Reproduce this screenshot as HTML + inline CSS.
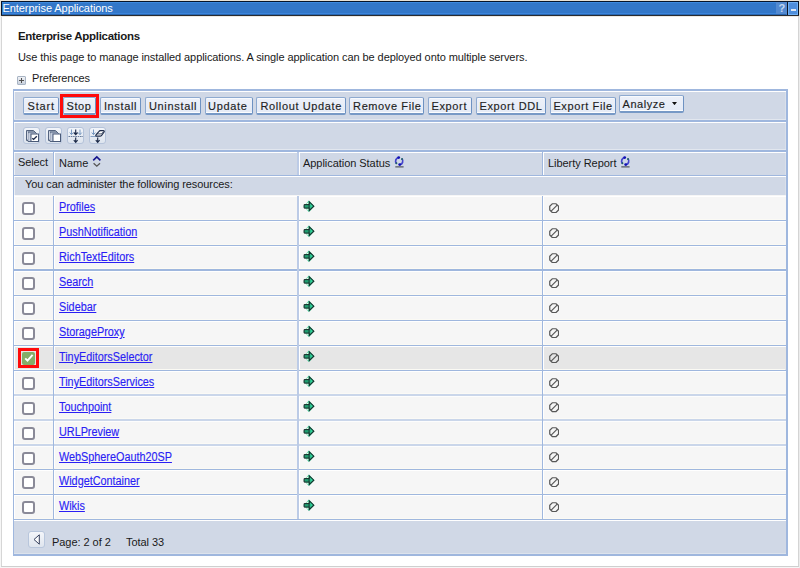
<!DOCTYPE html>
<html><head><meta charset="utf-8"><style>
*{margin:0;padding:0;box-sizing:border-box}
html,body{width:800px;height:568px;overflow:hidden;background:#fff}
body{position:relative;font-family:"Liberation Sans",sans-serif;font-size:11px;color:#1a1a1a}
.a{position:absolute}
.t{position:absolute;white-space:nowrap;line-height:13px}
.btn{position:absolute;top:97px;height:18px;background:linear-gradient(#edf1f9,#e4eaf6);border:1px solid #8eaad0;border-right-color:#6e92c2;border-bottom:2px solid #7799c6;border-radius:2px;box-shadow:inset 0 1px 0 #f8fafd,inset 0 -1px 0 #fcfdff;font-size:11px;line-height:16px;text-align:center;color:#1e1e1e;white-space:nowrap}
.bt{font-size:11px;line-height:14px;color:#1e1e1e;-webkit-text-stroke:0.15px #1e1e1e}
.lk{color:#2a1ef4;text-decoration:underline;font-size:12px;transform:scaleX(0.902);transform-origin:0 0;-webkit-text-stroke:0.15px #2a1ef4}
</style></head><body>
<div class="a" style="left:0px;top:0px;width:800px;height:568px;background:#f6f6f6"></div>
<div class="a" style="left:0px;top:0px;width:800px;height:16px;background:#e9e1d5"></div>
<div class="a" style="left:1px;top:16px;width:798px;height:551px;background:#fff"></div>
<div class="a" style="left:1px;top:16px;width:798px;height:1px;background:#eeeae3"></div>
<div class="a" style="left:1px;top:17px;width:1px;height:550px;background:#d6d6d6"></div>
<div class="a" style="left:798px;top:16px;width:1px;height:551px;background:#d4d4d4"></div>
<div class="a" style="left:799px;top:16px;width:1px;height:552px;background:#ececec"></div>
<div class="a" style="left:1px;top:566px;width:798px;height:1px;background:#cfcfcf"></div>
<div class="a" style="left:1px;top:1px;width:798px;height:15px;background:#07152a"></div>
<div class="a" style="left:1px;top:15px;width:798px;height:1px;background:#2a2c30"></div>
<div class="a" style="left:2px;top:2px;width:796px;height:13px;background:#3377c8"></div>
<div class="a" style="left:2px;top:2px;width:784px;height:1px;background:#3d8ae0"></div>
<div class="a" style="left:2px;top:13px;width:784px;height:1px;background:#3a84dc"></div>
<div class="a" style="left:2px;top:14px;width:784px;height:1px;background:#2866b0"></div>
<div class="a" style="left:776px;top:2px;width:11px;height:12px;background:#5289d0"></div>
<div class="a" style="left:787px;top:2px;width:1px;height:13px;background:#0d1525"></div>
<div class="a" style="left:788px;top:2px;width:10px;height:13px;background:#4f8fdc;border:1px solid #6fb0f4"></div>
<div class="a" style="left:791px;top:9px;width:5px;height:2px;background:#dfe8f4"></div>
<div class="t" style="left:778.5px;top:2px;font-size:11px;font-weight:bold;color:#c4d6ee;line-height:13px">?</div>
<div class="t" style="left:2.5px;top:2px;color:#fff;line-height:13px;letter-spacing:-0.07px">Enterprise Applications</div>
<div class="t" style="left:18px;top:30px;font-weight:bold;font-size:11.5px;letter-spacing:-0.3px">Enterprise Applications</div>
<div class="t" style="left:18px;top:51px;letter-spacing:-0.08px">Use this page to manage installed applications. A single application can be deployed onto multiple servers.</div>
<div class="a" style="left:17px;top:76px;width:9px;height:9px;background:linear-gradient(#f0f2f6,#c8d0dc);border:1px solid #a8b4c4;border-radius:1px"></div>
<div class="a" style="left:19px;top:80px;width:5px;height:1px;background:#505050"></div>
<div class="a" style="left:21px;top:78px;width:1px;height:5px;background:#505050"></div>
<div class="t" style="left:32px;top:72px;letter-spacing:-0.12px">Preferences</div>
<div class="a" style="left:13px;top:89px;width:775px;height:467px;background:#d0d8e6"></div>
<div class="a" style="left:13px;top:89px;width:775px;height:2px;background:#9fb7de"></div>
<div class="a" style="left:13px;top:89px;width:1px;height:467px;background:#9fb7de"></div>
<div class="a" style="left:786px;top:89px;width:2px;height:467px;background:#9fb7de"></div>
<div class="a" style="left:785px;top:91px;width:1px;height:463px;background:#dae0ea"></div>
<div class="a" style="left:14px;top:91px;width:1px;height:463px;background:#eef1f6"></div>
<div class="a" style="left:14px;top:91px;width:772px;height:1px;background:#fff"></div>
<div class="a" style="left:14px;top:119px;width:772px;height:1px;background:#e2e7ef"></div><div class="a" style="left:14px;top:120px;width:772px;height:2px;background:#9fb7de"></div><div class="a" style="left:14px;top:122px;width:772px;height:1px;background:#fff"></div>
<div class="a" style="left:14px;top:149px;width:772px;height:1px;background:#e2e7ef"></div><div class="a" style="left:14px;top:150px;width:772px;height:2px;background:#9fb7de"></div><div class="a" style="left:14px;top:152px;width:772px;height:1px;background:#fff"></div>
<div class="a" style="left:14px;top:175px;width:772px;height:1px;background:#9fb7de"></div><div class="a" style="left:14px;top:176px;width:772px;height:1px;background:#fff"></div>
<div class="a" style="left:14px;top:195px;width:772px;height:1px;background:#9fb7de"></div><div class="a" style="left:14px;top:196px;width:772px;height:1px;background:#fff"></div>
<div class="btn" style="left:23px;width:36px"></div>
<div class="t bt" style="left:27.5px;top:99px;letter-spacing:0.85px">Start</div>
<div class="btn" style="left:63px;width:33px"></div>
<div class="t bt" style="left:66.6px;top:99px;letter-spacing:0.55px">Stop</div>
<div class="btn" style="left:100px;width:41px"></div>
<div class="t bt" style="left:103.9px;top:99px;letter-spacing:0.65px">Install</div>
<div class="btn" style="left:145px;width:56px"></div>
<div class="t bt" style="left:148.9px;top:99px;letter-spacing:0.68px">Uninstall</div>
<div class="btn" style="left:205px;width:48px"></div>
<div class="t bt" style="left:208.1px;top:99px;letter-spacing:0.65px">Update</div>
<div class="btn" style="left:256px;width:90px"></div>
<div class="t bt" style="left:260.5px;top:99px;letter-spacing:0.62px">Rollout Update</div>
<div class="btn" style="left:349px;width:75px"></div>
<div class="t bt" style="left:353.1px;top:99px;letter-spacing:0.6px">Remove File</div>
<div class="btn" style="left:428px;width:44px"></div>
<div class="t bt" style="left:431.4px;top:99px;letter-spacing:0.65px">Export</div>
<div class="btn" style="left:476px;width:70px"></div>
<div class="t bt" style="left:479.5px;top:99px;letter-spacing:0.62px">Export DDL</div>
<div class="btn" style="left:550px;width:66px"></div>
<div class="t bt" style="left:553.4px;top:99px;letter-spacing:0.62px">Export File</div>
<div class="btn" style="left:619px;width:65px;top:95px"></div>
<div class="t bt" style="left:622.5px;top:97px;letter-spacing:0.55px">Analyze</div>
<svg class="a" style="left:672px;top:101.8px" width="5" height="3.2" viewBox="0 0 5 3.2"><path d="M0 0H5L2.5 3.2Z" fill="#111"/></svg>
<div class="a" style="left:60px;top:94px;width:39px;height:24px;border:3px solid #ff0a0a;background:transparent"></div>
<div class="a" style="left:23px;top:127px;width:17px;height:17px;border:1px solid #b5c3da;border-radius:3px;background:linear-gradient(#f2f5fa,#dde4ee)"></div>
<div class="a" style="left:45px;top:127px;width:17px;height:17px;border:1px solid #b5c3da;border-radius:3px;background:linear-gradient(#f2f5fa,#dde4ee)"></div>
<div class="a" style="left:67px;top:127px;width:17px;height:17px;border:1px solid #b5c3da;border-radius:3px;background:linear-gradient(#f2f5fa,#dde4ee)"></div>
<div class="a" style="left:89px;top:127px;width:17px;height:17px;border:1px solid #b5c3da;border-radius:3px;background:linear-gradient(#f2f5fa,#dde4ee)"></div>

<svg class="a" style="left:23px;top:127px" width="18" height="18" viewBox="0 0 18 18">
 <path d="M3.5 3.5H10.5L12 5V13.5H3.5Z" fill="#b4bfd2" stroke="#55647f" stroke-width="1"/>
 <path d="M5 5H12L13.5 6.5V14.5H5Z" fill="#b4bfd2" stroke="#55647f" stroke-width="1"/>
 <path d="M6 6.3V14" stroke="#e4e9f2" stroke-width="0.8"/><path d="M4.5 4.8V12.5" stroke="#e4e9f2" stroke-width="0.8"/>
 <rect x="8" y="7" width="7.5" height="7.5" fill="#fff" stroke="#4a5a78" stroke-width="1"/>
 <path d="M9.3 11.2L10.6 12.4 13.8 9.2" stroke="#1e2a48" stroke-width="1.4" fill="none"/>
</svg>
<svg class="a" style="left:45px;top:127px" width="18" height="18" viewBox="0 0 18 18">
 <path d="M3.5 3.5H10.5L12 5V13.5H3.5Z" fill="#b4bfd2" stroke="#55647f" stroke-width="1"/>
 <path d="M5 5H12L13.5 6.5V14.5H5Z" fill="#b4bfd2" stroke="#55647f" stroke-width="1"/>
 <path d="M6 6.3V14" stroke="#e4e9f2" stroke-width="0.8"/><path d="M4.5 4.8V12.5" stroke="#e4e9f2" stroke-width="0.8"/>
 <rect x="8" y="7" width="7.5" height="7.5" fill="#fff" stroke="#4a5a78" stroke-width="1"/>
</svg>
<svg class="a" style="left:67px;top:127px" width="18" height="18" viewBox="0 0 18 18">
 <path d="M4.5 2.5v5.3M2.7 5.6L4.5 7.6 6.3 5.6" stroke="#7a9ac2" stroke-width="1" fill="none"/>
 <path d="M8.7 2.5v5.3M6.8 5.5L8.7 7.6 10.6 5.5" stroke="#1c2a48" stroke-width="1.15" fill="none"/>
 <path d="M13 2.5v5.3M11.2 5.6L13 7.6 14.8 5.6" stroke="#7a9ac2" stroke-width="1" fill="none"/>
 <path d="M1.5 9.5h14.5" stroke="#5a6e90" stroke-width="0.9" stroke-dasharray="1.6 0.7"/>
 <path d="M8.7 10.6v4.8M6.8 13.2L8.7 15.3 10.6 13.2" stroke="#1c2a48" stroke-width="1.15" fill="none"/>
</svg>
<svg class="a" style="left:89px;top:127px" width="18" height="18" viewBox="0 0 18 18">
 <path d="M4.5 2.5v5.3M2.7 5.6L4.5 7.6 6.3 5.6" stroke="#7a9ac2" stroke-width="1" fill="none"/>
 <path d="M1.5 9.5h6" stroke="#7a9ac2" stroke-width="0.9"/>
 <path d="M6.8 8.2L9.8 4.6Q10.4 3.6 11.5 3.6H14.3Q15.7 3.8 15.1 5L12.6 8.3Q12 9.1 11 9.1H7.6Q6.4 9.1 6.8 8.2Z" fill="#fff" stroke="#1c2a48" stroke-width="1.1"/>
 <path d="M7.6 6.9H12.4" stroke="#1c2a48" stroke-width="0.8" fill="none"/>
 <path d="M12.4 6.9L14.9 4.3" stroke="#1c2a48" stroke-width="0.8" fill="none"/>
 <path d="M8.7 10.6v4.8M6.8 13.2L8.7 15.3 10.6 13.2" stroke="#1c2a48" stroke-width="1.15" fill="none"/>
</svg>

<div class="a" style="left:53px;top:152px;width:1px;height:23px;background:#9fb7de"></div>
<div class="a" style="left:54px;top:152px;width:1px;height:23px;background:#fff"></div>
<div class="a" style="left:297px;top:152px;width:2px;height:23px;background:#bccbe6"></div>
<div class="a" style="left:299px;top:152px;width:1px;height:23px;background:#fff"></div>
<div class="a" style="left:542px;top:152px;width:1px;height:23px;background:#9fb7de"></div>
<div class="a" style="left:543px;top:152px;width:1px;height:23px;background:#fff"></div>
<div class="t" style="left:18px;top:156px;letter-spacing:-0.1px">Select</div>
<div class="t" style="left:59px;top:157px;">Name</div>
<div class="t" style="left:303px;top:157px;letter-spacing:-0.05px">Application Status</div>
<div class="t" style="left:548px;top:157px;letter-spacing:-0.05px">Liberty Report</div>
<svg class="a" style="left:92px;top:155px" width="10" height="13" viewBox="0 0 10 13"><path d="M1.2 5.3L4.8 1.9 8.4 5.3" stroke="#14148c" stroke-width="1.6" fill="none"/><path d="M1.6 8.2L4.8 11.2 8 8.2" stroke="#555" stroke-width="1.3" fill="none"/></svg>
<svg class="a" style="left:394px;top:155px" width="11" height="13" viewBox="0 0 11 13"><path d="M4.57 2.55A3.6 3.6 0 0 0 2.44 8.41" stroke="#4444cc" stroke-width="1.7" fill="none"/><path d="M5.83 9.65A3.6 3.6 0 0 0 7.96 3.79" stroke="#4444cc" stroke-width="1.7" fill="none"/><circle cx="4.7" cy="2.6" r="1.4" fill="#1212b4"/><circle cx="5.7" cy="9.6" r="1.4" fill="#1212b4"/><circle cx="2.4" cy="8.3" r="1" fill="#1f5f66"/><circle cx="8" cy="3.9" r="1" fill="#1f5f66"/><rect x="1.3" y="11.1" width="8.3" height="1.5" fill="#6a6e78"/></svg>
<svg class="a" style="left:620px;top:155px" width="11" height="13" viewBox="0 0 11 13"><path d="M4.57 2.55A3.6 3.6 0 0 0 2.44 8.41" stroke="#4444cc" stroke-width="1.7" fill="none"/><path d="M5.83 9.65A3.6 3.6 0 0 0 7.96 3.79" stroke="#4444cc" stroke-width="1.7" fill="none"/><circle cx="4.7" cy="2.6" r="1.4" fill="#1212b4"/><circle cx="5.7" cy="9.6" r="1.4" fill="#1212b4"/><circle cx="2.4" cy="8.3" r="1" fill="#1f5f66"/><circle cx="8" cy="3.9" r="1" fill="#1f5f66"/><rect x="1.3" y="11.1" width="8.3" height="1.5" fill="#6a6e78"/></svg>
<div class="t" style="left:25px;top:178px;letter-spacing:-0.095px">You can administer the following resources:</div>
<div class="a" style="left:14px;top:195px;width:772px;height:26px;background:#f6f6f6"></div>
<div class="a" style="left:14px;top:195px;width:1px;height:26px;background:#fff"></div>
<div class="a" style="left:22px;top:202px;width:13px;height:13px;background:#fff;border:2px solid #8a8a98;border-radius:3px"></div>
<div class="t lk" style="left:59px;top:201px">Profiles</div>
<svg class="a" style="left:303px;top:200px" width="12" height="12" viewBox="0 0 12 12"><path d="M6 0.5L11.5 6.2 6 11.9 0.5 6.2Z" fill="#38d09a"/><path d="M3 4.1L5.4 2V4.1Z M3 8.6L5.4 10.6V8.6Z" fill="#f2f8e6"/><path d="M1.1 4.6H6.3V8.1H1.1Z" fill="#1f9e70" stroke="#1b2b2b" stroke-width="1"/><path d="M6.3 1.9L10.8 6.2 6.3 10.5Z" fill="#2fd49a" stroke="#1b2b2b" stroke-width="1.05" stroke-linejoin="miter"/><path d="M6.6 4.7H7.4V7.7H6.6Z" fill="#1f9e70"/></svg>
<svg class="a" style="left:548.8px;top:202.8px" width="10.3" height="10.3" viewBox="0 0 11 11"><path d="M3.5 0.8h4l2.7 2.7v4l-2.7 2.7h-4L0.8 7.5v-4z" fill="none" stroke="#585858" stroke-width="1.3"/><path d="M2.3 8.7L8.7 2.3" stroke="#585858" stroke-width="1.2"/></svg>
<div class="a" style="left:14px;top:220px;width:772px;height:26px;background:#f6f6f6"></div>
<div class="a" style="left:14px;top:220px;width:1px;height:26px;background:#fff"></div>
<div class="a" style="left:22px;top:227px;width:13px;height:13px;background:#fff;border:2px solid #8a8a98;border-radius:3px"></div>
<div class="t lk" style="left:59px;top:226px">PushNotification</div>
<svg class="a" style="left:303px;top:225px" width="12" height="12" viewBox="0 0 12 12"><path d="M6 0.5L11.5 6.2 6 11.9 0.5 6.2Z" fill="#38d09a"/><path d="M3 4.1L5.4 2V4.1Z M3 8.6L5.4 10.6V8.6Z" fill="#f2f8e6"/><path d="M1.1 4.6H6.3V8.1H1.1Z" fill="#1f9e70" stroke="#1b2b2b" stroke-width="1"/><path d="M6.3 1.9L10.8 6.2 6.3 10.5Z" fill="#2fd49a" stroke="#1b2b2b" stroke-width="1.05" stroke-linejoin="miter"/><path d="M6.6 4.7H7.4V7.7H6.6Z" fill="#1f9e70"/></svg>
<svg class="a" style="left:548.8px;top:227.8px" width="10.3" height="10.3" viewBox="0 0 11 11"><path d="M3.5 0.8h4l2.7 2.7v4l-2.7 2.7h-4L0.8 7.5v-4z" fill="none" stroke="#585858" stroke-width="1.3"/><path d="M2.3 8.7L8.7 2.3" stroke="#585858" stroke-width="1.2"/></svg>
<div class="a" style="left:14px;top:245px;width:772px;height:26px;background:#f6f6f6"></div>
<div class="a" style="left:14px;top:245px;width:1px;height:26px;background:#fff"></div>
<div class="a" style="left:22px;top:252px;width:13px;height:13px;background:#fff;border:2px solid #8a8a98;border-radius:3px"></div>
<div class="t lk" style="left:59px;top:251px">RichTextEditors</div>
<svg class="a" style="left:303px;top:250px" width="12" height="12" viewBox="0 0 12 12"><path d="M6 0.5L11.5 6.2 6 11.9 0.5 6.2Z" fill="#38d09a"/><path d="M3 4.1L5.4 2V4.1Z M3 8.6L5.4 10.6V8.6Z" fill="#f2f8e6"/><path d="M1.1 4.6H6.3V8.1H1.1Z" fill="#1f9e70" stroke="#1b2b2b" stroke-width="1"/><path d="M6.3 1.9L10.8 6.2 6.3 10.5Z" fill="#2fd49a" stroke="#1b2b2b" stroke-width="1.05" stroke-linejoin="miter"/><path d="M6.6 4.7H7.4V7.7H6.6Z" fill="#1f9e70"/></svg>
<svg class="a" style="left:548.8px;top:252.8px" width="10.3" height="10.3" viewBox="0 0 11 11"><path d="M3.5 0.8h4l2.7 2.7v4l-2.7 2.7h-4L0.8 7.5v-4z" fill="none" stroke="#585858" stroke-width="1.3"/><path d="M2.3 8.7L8.7 2.3" stroke="#585858" stroke-width="1.2"/></svg>
<div class="a" style="left:14px;top:270px;width:772px;height:26px;background:#f6f6f6"></div>
<div class="a" style="left:14px;top:270px;width:1px;height:26px;background:#fff"></div>
<div class="a" style="left:22px;top:277px;width:13px;height:13px;background:#fff;border:2px solid #8a8a98;border-radius:3px"></div>
<div class="t lk" style="left:59px;top:276px">Search</div>
<svg class="a" style="left:303px;top:275px" width="12" height="12" viewBox="0 0 12 12"><path d="M6 0.5L11.5 6.2 6 11.9 0.5 6.2Z" fill="#38d09a"/><path d="M3 4.1L5.4 2V4.1Z M3 8.6L5.4 10.6V8.6Z" fill="#f2f8e6"/><path d="M1.1 4.6H6.3V8.1H1.1Z" fill="#1f9e70" stroke="#1b2b2b" stroke-width="1"/><path d="M6.3 1.9L10.8 6.2 6.3 10.5Z" fill="#2fd49a" stroke="#1b2b2b" stroke-width="1.05" stroke-linejoin="miter"/><path d="M6.6 4.7H7.4V7.7H6.6Z" fill="#1f9e70"/></svg>
<svg class="a" style="left:548.8px;top:277.8px" width="10.3" height="10.3" viewBox="0 0 11 11"><path d="M3.5 0.8h4l2.7 2.7v4l-2.7 2.7h-4L0.8 7.5v-4z" fill="none" stroke="#585858" stroke-width="1.3"/><path d="M2.3 8.7L8.7 2.3" stroke="#585858" stroke-width="1.2"/></svg>
<div class="a" style="left:14px;top:295px;width:772px;height:26px;background:#f6f6f6"></div>
<div class="a" style="left:14px;top:295px;width:1px;height:26px;background:#fff"></div>
<div class="a" style="left:22px;top:302px;width:13px;height:13px;background:#fff;border:2px solid #8a8a98;border-radius:3px"></div>
<div class="t lk" style="left:59px;top:301px">Sidebar</div>
<svg class="a" style="left:303px;top:300px" width="12" height="12" viewBox="0 0 12 12"><path d="M6 0.5L11.5 6.2 6 11.9 0.5 6.2Z" fill="#38d09a"/><path d="M3 4.1L5.4 2V4.1Z M3 8.6L5.4 10.6V8.6Z" fill="#f2f8e6"/><path d="M1.1 4.6H6.3V8.1H1.1Z" fill="#1f9e70" stroke="#1b2b2b" stroke-width="1"/><path d="M6.3 1.9L10.8 6.2 6.3 10.5Z" fill="#2fd49a" stroke="#1b2b2b" stroke-width="1.05" stroke-linejoin="miter"/><path d="M6.6 4.7H7.4V7.7H6.6Z" fill="#1f9e70"/></svg>
<svg class="a" style="left:548.8px;top:302.8px" width="10.3" height="10.3" viewBox="0 0 11 11"><path d="M3.5 0.8h4l2.7 2.7v4l-2.7 2.7h-4L0.8 7.5v-4z" fill="none" stroke="#585858" stroke-width="1.3"/><path d="M2.3 8.7L8.7 2.3" stroke="#585858" stroke-width="1.2"/></svg>
<div class="a" style="left:14px;top:320px;width:772px;height:26px;background:#f6f6f6"></div>
<div class="a" style="left:14px;top:320px;width:1px;height:26px;background:#fff"></div>
<div class="a" style="left:22px;top:327px;width:13px;height:13px;background:#fff;border:2px solid #8a8a98;border-radius:3px"></div>
<div class="t lk" style="left:59px;top:326px">StorageProxy</div>
<svg class="a" style="left:303px;top:325px" width="12" height="12" viewBox="0 0 12 12"><path d="M6 0.5L11.5 6.2 6 11.9 0.5 6.2Z" fill="#38d09a"/><path d="M3 4.1L5.4 2V4.1Z M3 8.6L5.4 10.6V8.6Z" fill="#f2f8e6"/><path d="M1.1 4.6H6.3V8.1H1.1Z" fill="#1f9e70" stroke="#1b2b2b" stroke-width="1"/><path d="M6.3 1.9L10.8 6.2 6.3 10.5Z" fill="#2fd49a" stroke="#1b2b2b" stroke-width="1.05" stroke-linejoin="miter"/><path d="M6.6 4.7H7.4V7.7H6.6Z" fill="#1f9e70"/></svg>
<svg class="a" style="left:548.8px;top:327.8px" width="10.3" height="10.3" viewBox="0 0 11 11"><path d="M3.5 0.8h4l2.7 2.7v4l-2.7 2.7h-4L0.8 7.5v-4z" fill="none" stroke="#585858" stroke-width="1.3"/><path d="M2.3 8.7L8.7 2.3" stroke="#585858" stroke-width="1.2"/></svg>
<div class="a" style="left:14px;top:345px;width:772px;height:26px;background:#e6e6e6"></div>
<div class="a" style="left:14px;top:345px;width:1px;height:26px;background:#fff"></div>
<div class="a" style="left:22px;top:352px;width:13px;height:13px;background:#85ad68;border-radius:2px"></div>
<svg class="a" style="left:22px;top:352px" width="13" height="13" viewBox="0 0 13 13"><path d="M3.2 6.4L5.5 8.7 10.6 2.8" stroke="#fff" stroke-width="1.9" fill="none"/></svg>
<div class="a" style="left:18px;top:348px;width:21px;height:20px;border:3px solid #ff0a0a"></div>
<div class="t lk" style="left:59px;top:351px">TinyEditorsSelector</div>
<svg class="a" style="left:303px;top:350px" width="12" height="12" viewBox="0 0 12 12"><path d="M6 0.5L11.5 6.2 6 11.9 0.5 6.2Z" fill="#38d09a"/><path d="M3 4.1L5.4 2V4.1Z M3 8.6L5.4 10.6V8.6Z" fill="#f2f8e6"/><path d="M1.1 4.6H6.3V8.1H1.1Z" fill="#1f9e70" stroke="#1b2b2b" stroke-width="1"/><path d="M6.3 1.9L10.8 6.2 6.3 10.5Z" fill="#2fd49a" stroke="#1b2b2b" stroke-width="1.05" stroke-linejoin="miter"/><path d="M6.6 4.7H7.4V7.7H6.6Z" fill="#1f9e70"/></svg>
<svg class="a" style="left:548.8px;top:352.8px" width="10.3" height="10.3" viewBox="0 0 11 11"><path d="M3.5 0.8h4l2.7 2.7v4l-2.7 2.7h-4L0.8 7.5v-4z" fill="none" stroke="#585858" stroke-width="1.3"/><path d="M2.3 8.7L8.7 2.3" stroke="#585858" stroke-width="1.2"/></svg>
<div class="a" style="left:14px;top:370px;width:772px;height:25px;background:#f6f6f6"></div>
<div class="a" style="left:14px;top:370px;width:1px;height:25px;background:#fff"></div>
<div class="a" style="left:22px;top:377px;width:13px;height:13px;background:#fff;border:2px solid #8a8a98;border-radius:3px"></div>
<div class="t lk" style="left:59px;top:376px">TinyEditorsServices</div>
<svg class="a" style="left:303px;top:375px" width="12" height="12" viewBox="0 0 12 12"><path d="M6 0.5L11.5 6.2 6 11.9 0.5 6.2Z" fill="#38d09a"/><path d="M3 4.1L5.4 2V4.1Z M3 8.6L5.4 10.6V8.6Z" fill="#f2f8e6"/><path d="M1.1 4.6H6.3V8.1H1.1Z" fill="#1f9e70" stroke="#1b2b2b" stroke-width="1"/><path d="M6.3 1.9L10.8 6.2 6.3 10.5Z" fill="#2fd49a" stroke="#1b2b2b" stroke-width="1.05" stroke-linejoin="miter"/><path d="M6.6 4.7H7.4V7.7H6.6Z" fill="#1f9e70"/></svg>
<svg class="a" style="left:548.8px;top:377.8px" width="10.3" height="10.3" viewBox="0 0 11 11"><path d="M3.5 0.8h4l2.7 2.7v4l-2.7 2.7h-4L0.8 7.5v-4z" fill="none" stroke="#585858" stroke-width="1.3"/><path d="M2.3 8.7L8.7 2.3" stroke="#585858" stroke-width="1.2"/></svg>
<div class="a" style="left:14px;top:394px;width:772px;height:26px;background:#f6f6f6"></div>
<div class="a" style="left:14px;top:394px;width:1px;height:26px;background:#fff"></div>
<div class="a" style="left:22px;top:401.5px;width:13px;height:13px;background:#fff;border:2px solid #8a8a98;border-radius:3px"></div>
<div class="t lk" style="left:59px;top:400.5px">Touchpoint</div>
<svg class="a" style="left:303px;top:399.5px" width="12" height="12" viewBox="0 0 12 12"><path d="M6 0.5L11.5 6.2 6 11.9 0.5 6.2Z" fill="#38d09a"/><path d="M3 4.1L5.4 2V4.1Z M3 8.6L5.4 10.6V8.6Z" fill="#f2f8e6"/><path d="M1.1 4.6H6.3V8.1H1.1Z" fill="#1f9e70" stroke="#1b2b2b" stroke-width="1"/><path d="M6.3 1.9L10.8 6.2 6.3 10.5Z" fill="#2fd49a" stroke="#1b2b2b" stroke-width="1.05" stroke-linejoin="miter"/><path d="M6.6 4.7H7.4V7.7H6.6Z" fill="#1f9e70"/></svg>
<svg class="a" style="left:548.8px;top:402.3px" width="10.3" height="10.3" viewBox="0 0 11 11"><path d="M3.5 0.8h4l2.7 2.7v4l-2.7 2.7h-4L0.8 7.5v-4z" fill="none" stroke="#585858" stroke-width="1.3"/><path d="M2.3 8.7L8.7 2.3" stroke="#585858" stroke-width="1.2"/></svg>
<div class="a" style="left:14px;top:419px;width:772px;height:26px;background:#f6f6f6"></div>
<div class="a" style="left:14px;top:419px;width:1px;height:26px;background:#fff"></div>
<div class="a" style="left:22px;top:426.5px;width:13px;height:13px;background:#fff;border:2px solid #8a8a98;border-radius:3px"></div>
<div class="t lk" style="left:59px;top:425.5px">URLPreview</div>
<svg class="a" style="left:303px;top:424.5px" width="12" height="12" viewBox="0 0 12 12"><path d="M6 0.5L11.5 6.2 6 11.9 0.5 6.2Z" fill="#38d09a"/><path d="M3 4.1L5.4 2V4.1Z M3 8.6L5.4 10.6V8.6Z" fill="#f2f8e6"/><path d="M1.1 4.6H6.3V8.1H1.1Z" fill="#1f9e70" stroke="#1b2b2b" stroke-width="1"/><path d="M6.3 1.9L10.8 6.2 6.3 10.5Z" fill="#2fd49a" stroke="#1b2b2b" stroke-width="1.05" stroke-linejoin="miter"/><path d="M6.6 4.7H7.4V7.7H6.6Z" fill="#1f9e70"/></svg>
<svg class="a" style="left:548.8px;top:427.3px" width="10.3" height="10.3" viewBox="0 0 11 11"><path d="M3.5 0.8h4l2.7 2.7v4l-2.7 2.7h-4L0.8 7.5v-4z" fill="none" stroke="#585858" stroke-width="1.3"/><path d="M2.3 8.7L8.7 2.3" stroke="#585858" stroke-width="1.2"/></svg>
<div class="a" style="left:14px;top:444px;width:772px;height:26px;background:#f6f6f6"></div>
<div class="a" style="left:14px;top:444px;width:1px;height:26px;background:#fff"></div>
<div class="a" style="left:22px;top:451.5px;width:13px;height:13px;background:#fff;border:2px solid #8a8a98;border-radius:3px"></div>
<div class="t lk" style="left:59px;top:450.5px">WebSphereOauth20SP</div>
<svg class="a" style="left:303px;top:449.5px" width="12" height="12" viewBox="0 0 12 12"><path d="M6 0.5L11.5 6.2 6 11.9 0.5 6.2Z" fill="#38d09a"/><path d="M3 4.1L5.4 2V4.1Z M3 8.6L5.4 10.6V8.6Z" fill="#f2f8e6"/><path d="M1.1 4.6H6.3V8.1H1.1Z" fill="#1f9e70" stroke="#1b2b2b" stroke-width="1"/><path d="M6.3 1.9L10.8 6.2 6.3 10.5Z" fill="#2fd49a" stroke="#1b2b2b" stroke-width="1.05" stroke-linejoin="miter"/><path d="M6.6 4.7H7.4V7.7H6.6Z" fill="#1f9e70"/></svg>
<svg class="a" style="left:548.8px;top:452.3px" width="10.3" height="10.3" viewBox="0 0 11 11"><path d="M3.5 0.8h4l2.7 2.7v4l-2.7 2.7h-4L0.8 7.5v-4z" fill="none" stroke="#585858" stroke-width="1.3"/><path d="M2.3 8.7L8.7 2.3" stroke="#585858" stroke-width="1.2"/></svg>
<div class="a" style="left:14px;top:469px;width:772px;height:26px;background:#f6f6f6"></div>
<div class="a" style="left:14px;top:469px;width:1px;height:26px;background:#fff"></div>
<div class="a" style="left:22px;top:476px;width:13px;height:13px;background:#fff;border:2px solid #8a8a98;border-radius:3px"></div>
<div class="t lk" style="left:59px;top:475px">WidgetContainer</div>
<svg class="a" style="left:303px;top:474px" width="12" height="12" viewBox="0 0 12 12"><path d="M6 0.5L11.5 6.2 6 11.9 0.5 6.2Z" fill="#38d09a"/><path d="M3 4.1L5.4 2V4.1Z M3 8.6L5.4 10.6V8.6Z" fill="#f2f8e6"/><path d="M1.1 4.6H6.3V8.1H1.1Z" fill="#1f9e70" stroke="#1b2b2b" stroke-width="1"/><path d="M6.3 1.9L10.8 6.2 6.3 10.5Z" fill="#2fd49a" stroke="#1b2b2b" stroke-width="1.05" stroke-linejoin="miter"/><path d="M6.6 4.7H7.4V7.7H6.6Z" fill="#1f9e70"/></svg>
<svg class="a" style="left:548.8px;top:476.8px" width="10.3" height="10.3" viewBox="0 0 11 11"><path d="M3.5 0.8h4l2.7 2.7v4l-2.7 2.7h-4L0.8 7.5v-4z" fill="none" stroke="#585858" stroke-width="1.3"/><path d="M2.3 8.7L8.7 2.3" stroke="#585858" stroke-width="1.2"/></svg>
<div class="a" style="left:14px;top:494px;width:772px;height:26px;background:#f6f6f6"></div>
<div class="a" style="left:14px;top:494px;width:1px;height:26px;background:#fff"></div>
<div class="a" style="left:22px;top:501px;width:13px;height:13px;background:#fff;border:2px solid #8a8a98;border-radius:3px"></div>
<div class="t lk" style="left:59px;top:500px">Wikis</div>
<svg class="a" style="left:303px;top:499px" width="12" height="12" viewBox="0 0 12 12"><path d="M6 0.5L11.5 6.2 6 11.9 0.5 6.2Z" fill="#38d09a"/><path d="M3 4.1L5.4 2V4.1Z M3 8.6L5.4 10.6V8.6Z" fill="#f2f8e6"/><path d="M1.1 4.6H6.3V8.1H1.1Z" fill="#1f9e70" stroke="#1b2b2b" stroke-width="1"/><path d="M6.3 1.9L10.8 6.2 6.3 10.5Z" fill="#2fd49a" stroke="#1b2b2b" stroke-width="1.05" stroke-linejoin="miter"/><path d="M6.6 4.7H7.4V7.7H6.6Z" fill="#1f9e70"/></svg>
<svg class="a" style="left:548.8px;top:501.8px" width="10.3" height="10.3" viewBox="0 0 11 11"><path d="M3.5 0.8h4l2.7 2.7v4l-2.7 2.7h-4L0.8 7.5v-4z" fill="none" stroke="#585858" stroke-width="1.3"/><path d="M2.3 8.7L8.7 2.3" stroke="#585858" stroke-width="1.2"/></svg>
<div class="a" style="left:54px;top:196px;width:1px;height:323px;background:#fff"></div>
<div class="a" style="left:299px;top:196px;width:1px;height:323px;background:#fff"></div>
<div class="a" style="left:543px;top:196px;width:1px;height:323px;background:#fff"></div>
<div class="a" style="left:14px;top:196px;width:772px;height:1px;background:#fff"></div>
<div class="a" style="left:15px;top:219px;width:770px;height:1px;background:#fbfaf4"></div>
<div class="a" style="left:14px;top:220px;width:772px;height:1px;background:#9fb7de"></div>
<div class="a" style="left:14px;top:221px;width:772px;height:1px;background:#fff"></div>
<div class="a" style="left:15px;top:244px;width:770px;height:1px;background:#fbfaf4"></div>
<div class="a" style="left:14px;top:245px;width:772px;height:1px;background:#9fb7de"></div>
<div class="a" style="left:14px;top:246px;width:772px;height:1px;background:#fff"></div>
<div class="a" style="left:15px;top:269px;width:770px;height:1px;background:#fbfaf4"></div>
<div class="a" style="left:14px;top:270px;width:772px;height:1px;background:#9fb7de"></div>
<div class="a" style="left:14px;top:271px;width:772px;height:1px;background:#fff"></div>
<div class="a" style="left:14px;top:269px;width:772px;height:1px;background:#9fb7de"></div>
<div class="a" style="left:14px;top:268px;width:772px;height:1px;background:#fdfbf4"></div>
<div class="a" style="left:15px;top:294px;width:770px;height:1px;background:#fbfaf4"></div>
<div class="a" style="left:14px;top:295px;width:772px;height:1px;background:#9fb7de"></div>
<div class="a" style="left:14px;top:296px;width:772px;height:1px;background:#fff"></div>
<div class="a" style="left:15px;top:319px;width:770px;height:1px;background:#fbfaf4"></div>
<div class="a" style="left:14px;top:320px;width:772px;height:1px;background:#9fb7de"></div>
<div class="a" style="left:14px;top:321px;width:772px;height:1px;background:#fff"></div>
<div class="a" style="left:15px;top:344px;width:770px;height:1px;background:#fbfaf4"></div>
<div class="a" style="left:14px;top:345px;width:772px;height:1px;background:#9fb7de"></div>
<div class="a" style="left:14px;top:346px;width:772px;height:1px;background:#fff"></div>
<div class="a" style="left:15px;top:369px;width:770px;height:1px;background:#fbfaf4"></div>
<div class="a" style="left:14px;top:370px;width:772px;height:1px;background:#9fb7de"></div>
<div class="a" style="left:14px;top:371px;width:772px;height:1px;background:#fff"></div>
<div class="a" style="left:15px;top:393px;width:770px;height:1px;background:#fbfaf6"></div>
<div class="a" style="left:14px;top:394px;width:772px;height:2px;background:#cad6ea"></div>
<div class="a" style="left:14px;top:396px;width:772px;height:1px;background:#fdfdfd"></div>
<div class="a" style="left:15px;top:418px;width:770px;height:1px;background:#fbfaf6"></div>
<div class="a" style="left:14px;top:419px;width:772px;height:2px;background:#cad6ea"></div>
<div class="a" style="left:14px;top:421px;width:772px;height:1px;background:#fdfdfd"></div>
<div class="a" style="left:15px;top:443px;width:770px;height:1px;background:#fbfaf6"></div>
<div class="a" style="left:14px;top:444px;width:772px;height:2px;background:#cad6ea"></div>
<div class="a" style="left:14px;top:446px;width:772px;height:1px;background:#fdfdfd"></div>
<div class="a" style="left:15px;top:468px;width:770px;height:1px;background:#fbfaf4"></div>
<div class="a" style="left:14px;top:469px;width:772px;height:1px;background:#9fb7de"></div>
<div class="a" style="left:14px;top:470px;width:772px;height:1px;background:#fff"></div>
<div class="a" style="left:15px;top:493px;width:770px;height:1px;background:#fbfaf4"></div>
<div class="a" style="left:14px;top:494px;width:772px;height:1px;background:#9fb7de"></div>
<div class="a" style="left:14px;top:495px;width:772px;height:1px;background:#fff"></div>
<div class="a" style="left:15px;top:518px;width:770px;height:1px;background:#fbfaf4"></div>
<div class="a" style="left:14px;top:519px;width:772px;height:1px;background:#9fb7de"></div>
<div class="a" style="left:14px;top:520px;width:772px;height:1px;background:#fff"></div>
<div class="a" style="left:53px;top:196px;width:1px;height:323px;background:#9fb7de"></div>
<div class="a" style="left:297px;top:196px;width:2px;height:323px;background:#bccbe6"></div>
<div class="a" style="left:542px;top:196px;width:1px;height:323px;background:#9fb7de"></div>
<div class="a" style="left:14px;top:521px;width:772px;height:33px;background:#d0d8e6"></div>
<div class="a" style="left:14px;top:520px;width:772px;height:1px;background:#fff"></div>
<div class="a" style="left:14px;top:553px;width:772px;height:1px;background:#dde3ec"></div>
<div class="a" style="left:14px;top:554px;width:772px;height:2px;background:#9fb7de"></div>
<div class="a" style="left:28px;top:531px;width:17px;height:17px;border:1px solid #b8c6dc;border-radius:3px;background:linear-gradient(#f4f6fa,#dfe5ee)"></div>
<svg class="a" style="left:33px;top:534px" width="8" height="11" viewBox="0 0 8 11"><path d="M6.3 0.8V10.2L1 5.5Z" fill="#fbfcfe" stroke="#38425e" stroke-width="1"/></svg>
<div class="t" style="left:52px;top:535.5px;letter-spacing:-0.05px">Page: 2 of 2</div>
<div class="t" style="left:126px;top:535.5px;letter-spacing:-0.05px">Total 33</div>
</body></html>
